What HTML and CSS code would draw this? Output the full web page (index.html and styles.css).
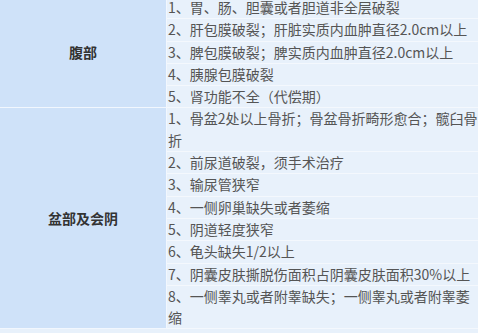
FILE: index.html
```html
<!DOCTYPE html>
<html lang="zh-CN">
<head>
<meta charset="utf-8">
<link rel="stylesheet" href="styles.css">
</head>
<body>
<div class="wrap">
<table class="grid">
  <tbody>
    <tr><th class="part" rowspan="5">腹部</th><td>1、胃、肠、胆囊或者胆道非全层破裂</td></tr>
    <tr><td>2、肝包膜破裂；肝脏实质内血肿直径2.0cm以上</td></tr>
    <tr><td>3、脾包膜破裂；脾实质内血肿直径2.0cm以上</td></tr>
    <tr><td>4、胰腺包膜破裂</td></tr>
    <tr><td>5、肾功能不全（代偿期）</td></tr>
    <tr><th class="part" rowspan="8">盆部及会阴</th><td>1、骨盆2处以上骨折；骨盆骨折畸形愈合；髋臼骨折</td></tr>
    <tr><td>2、前尿道破裂，须手术治疗</td></tr>
    <tr><td>3、输尿管狭窄</td></tr>
    <tr><td>4、一侧卵巢缺失或者萎缩</td></tr>
    <tr><td>5、阴道轻度狭窄</td></tr>
    <tr><td>6、龟头缺失1/2以上</td></tr>
    <tr><td>7、阴囊皮肤撕脱伤面积占阴囊皮肤面积30%以上</td></tr>
    <tr><td>8、一侧睾丸或者附睾缺失；一侧睾丸或者附睾萎缩</td></tr>
  </tbody>
</table>
</div>
</body>
</html>
```

FILE: styles.css
```css
html, body {
  margin: 0;
  padding: 0;
  background: #e8f1fb;
  overflow: hidden;
}
.wrap {
  margin-top: -3px;
  width: 490px;
}
.grid {
  border-collapse: collapse;
  width: 490px;
  table-layout: fixed;
  font-family: "Microsoft YaHei", "Noto Sans CJK SC", sans-serif;
  font-size: 14px;
}
.grid th.part {
  width: 166px;
  background: #cfe2f9;
  color: #333;
  font-weight: bold;
  text-align: center;
  vertical-align: middle;
  padding: 0;
  border-right: 1px solid #f2f7fe;
  border-bottom: 1px solid #f2f7fe;
}
.grid td {
  background: #e8f1fb;
  color: #555;
  line-height: 21.3px;
  padding: 0 0 0 1px;
  border-bottom: 1px solid #f4f8fd;
  word-break: break-all;
  padding-right: 10px;
}
```
